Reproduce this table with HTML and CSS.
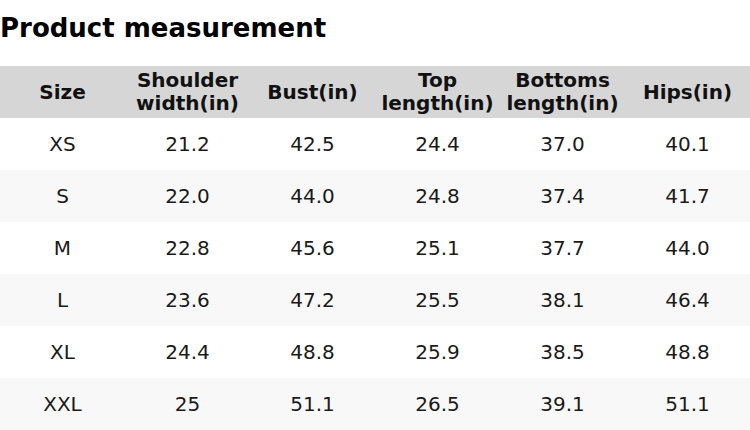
FILE: index.html
```html
<!DOCTYPE html>
<html>
<head>
<meta charset="utf-8">
<link rel="stylesheet" href="styles.css">
</head>
<body>
<h1 class="title">Product measurement</h1>
<table class="size-table">
  <thead>
    <tr>
      <th>Size</th>
      <th>Shoulder<br>width(in)</th>
      <th>Bust(in)</th>
      <th>Top<br>length(in)</th>
      <th>Bottoms<br>length(in)</th>
      <th>Hips(in)</th>
    </tr>
  </thead>
  <tbody>
    <tr><td>XS</td><td>21.2</td><td>42.5</td><td>24.4</td><td>37.0</td><td>40.1</td></tr>
    <tr><td>S</td><td>22.0</td><td>44.0</td><td>24.8</td><td>37.4</td><td>41.7</td></tr>
    <tr><td>M</td><td>22.8</td><td>45.6</td><td>25.1</td><td>37.7</td><td>44.0</td></tr>
    <tr><td>L</td><td>23.6</td><td>47.2</td><td>25.5</td><td>38.1</td><td>46.4</td></tr>
    <tr><td>XL</td><td>24.4</td><td>48.8</td><td>25.9</td><td>38.5</td><td>48.8</td></tr>
    <tr><td>XXL</td><td>25</td><td>51.1</td><td>26.5</td><td>39.1</td><td>51.1</td></tr>
  </tbody>
</table>
</body>
</html>
```
FILE: styles.css
```css
html, body {
  margin: 0;
  padding: 0;
  background: #ffffff;
  font-family: "DejaVu Sans", sans-serif;
  color: #111111;
}
.title {
  margin: 0 0 10px 0;
  font-size: 26px;
  line-height: 56px;
  font-weight: bold;
  color: #000000;
}
.size-table {
  width: 750px;
  border-collapse: collapse;
  table-layout: fixed;
}
.size-table th,
.size-table td {
  height: 52px;
  padding: 0;
  text-align: center;
  vertical-align: middle;
}
.size-table th {
  background: #d6d6d6;
  font-size: 20px;
  line-height: 23px;
  font-weight: bold;
  color: #111111;
}
.size-table td {
  font-size: 20px;
  color: #1a1a1a;
}
.size-table tbody tr:nth-child(even) td {
  background: #f8f8f8;
}
```
